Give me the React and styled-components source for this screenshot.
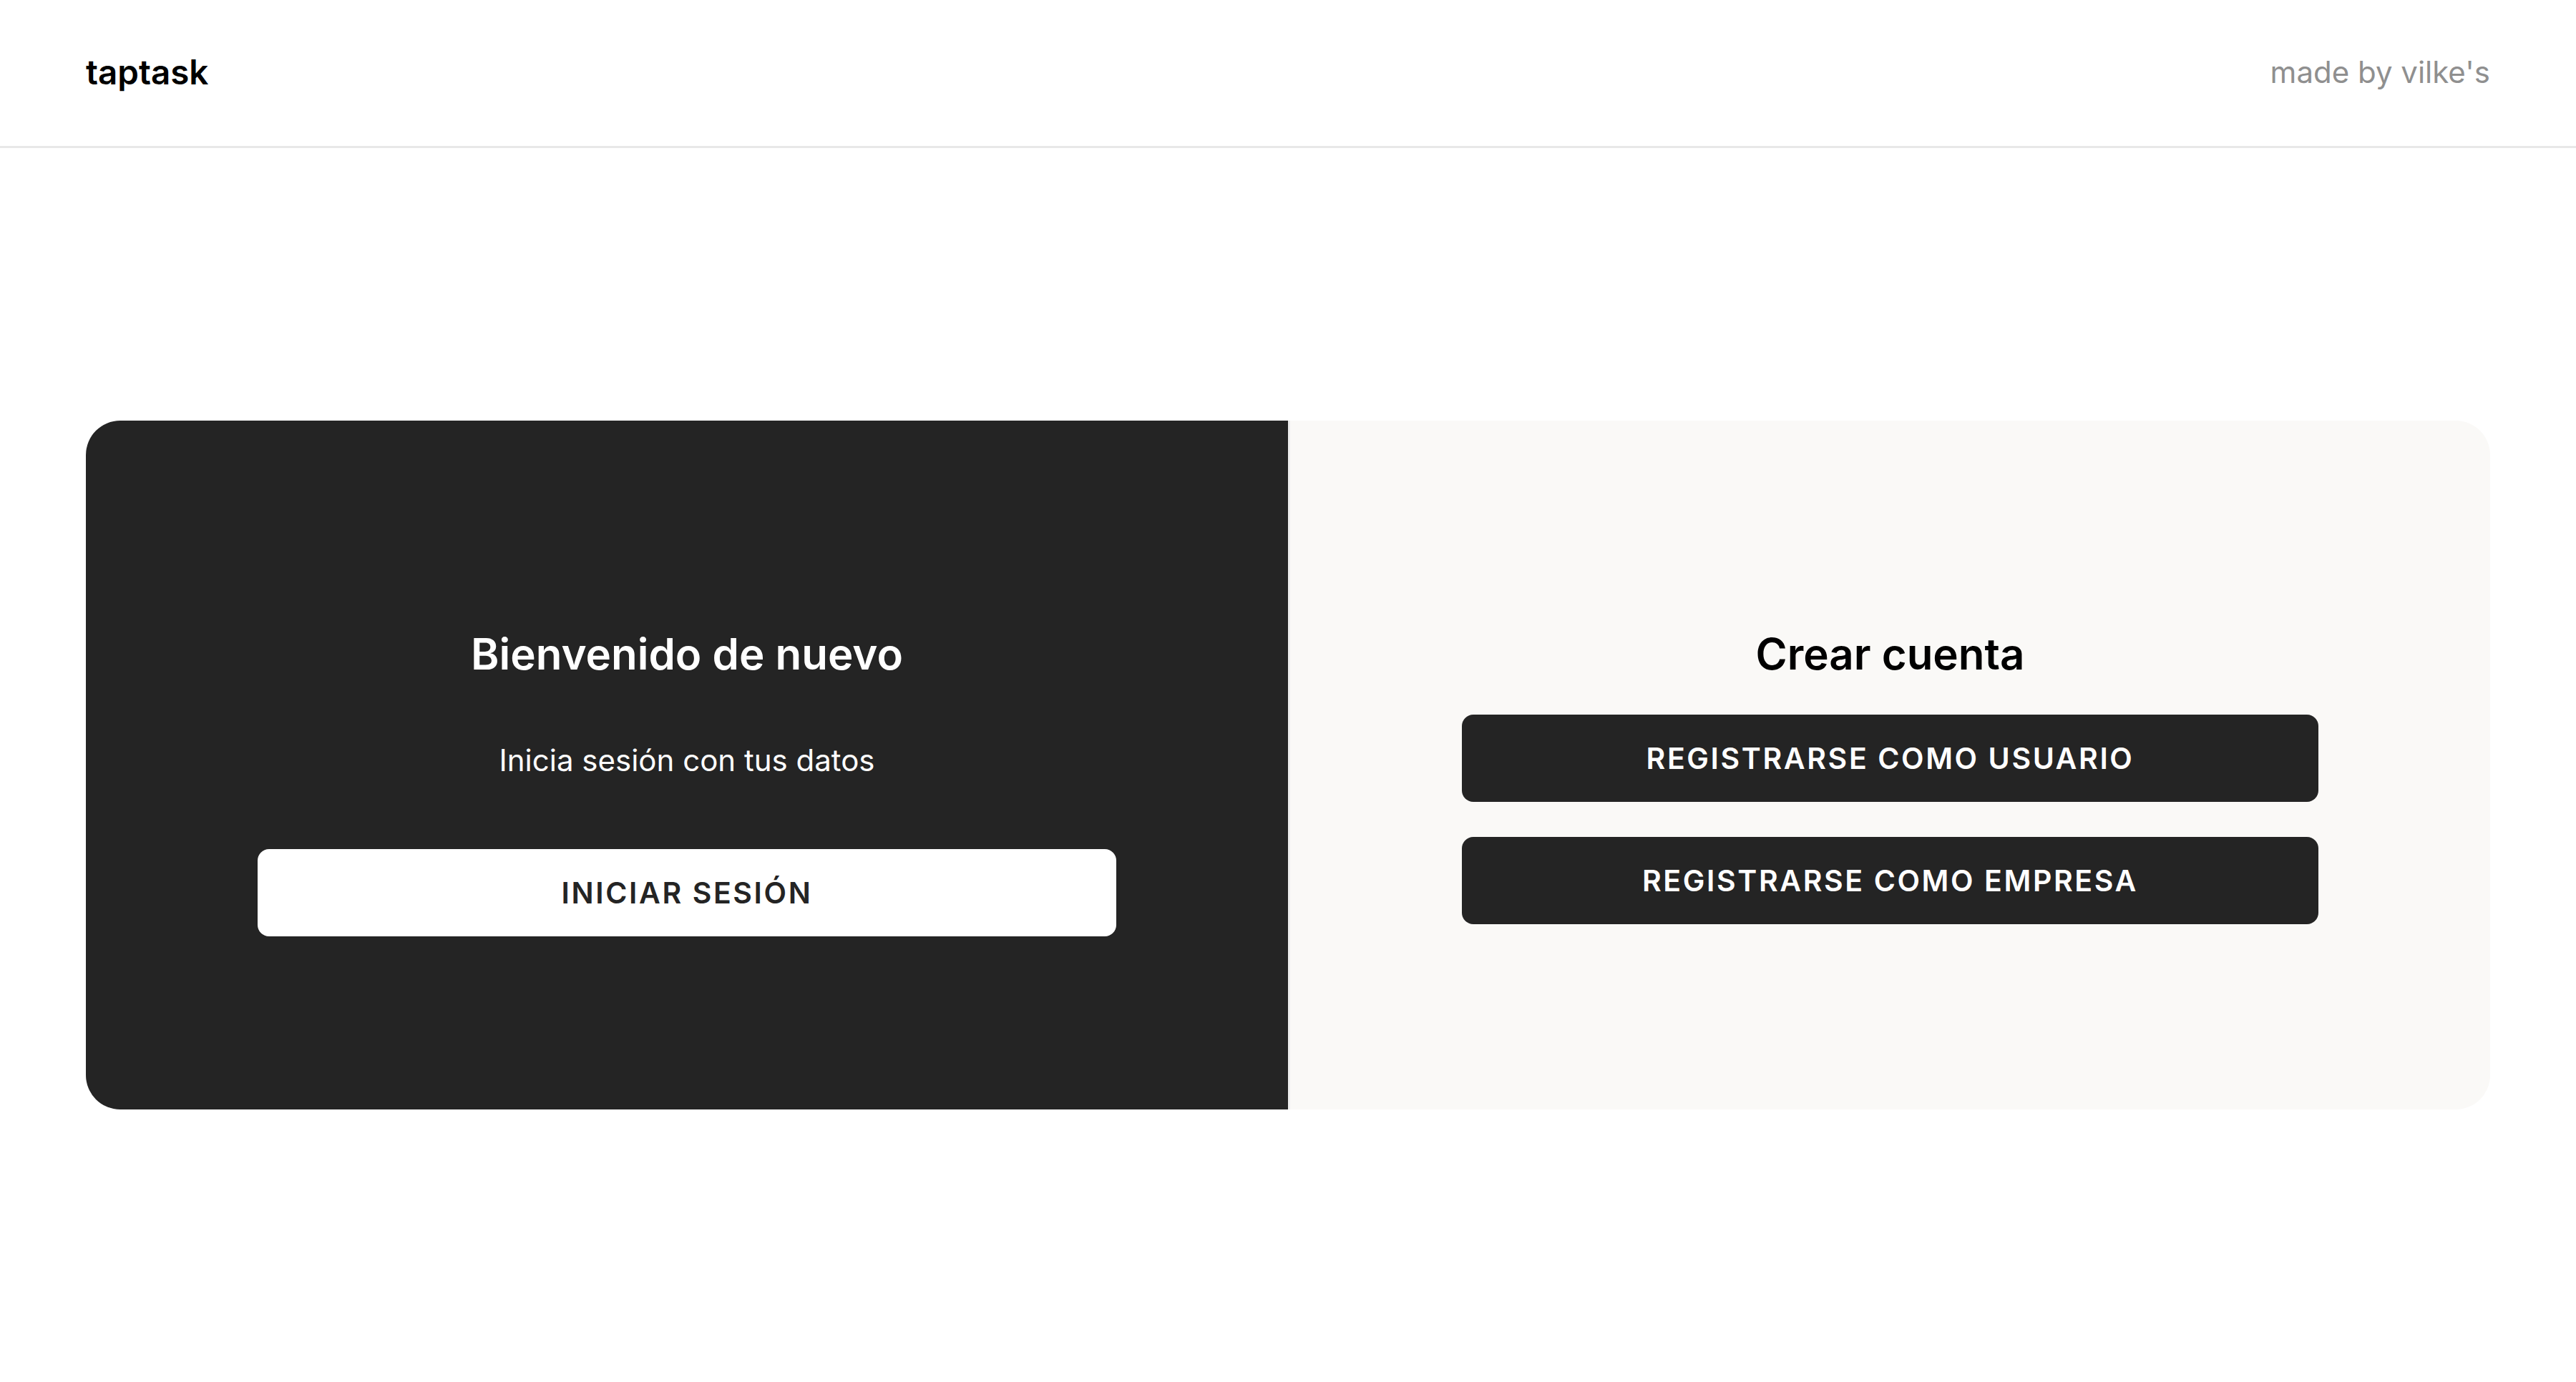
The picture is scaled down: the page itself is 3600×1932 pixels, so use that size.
import styled, { createGlobalStyle } from "styled-components";

const GlobalStyle = createGlobalStyle`
  * {
    box-sizing: border-box;
  }
  body {
    margin: 0;
    background: #ffffff;
    font-family: Inter, "Noto Sans", "Liberation Sans", sans-serif;
    color: #000000;
  }
`;

export default function App() {
  return (
    <>
      <GlobalStyle />
      <Header>
        <Brand>taptask</Brand>
        <Credit>made by vilke's</Credit>
      </Header>
      <Main>
        <Card>
          <Panel dark>
            <Title dark>Bienvenido de nuevo</Title>
            <Subtitle>Inicia sesión con tus datos</Subtitle>
            <ActionButton light>INICIAR SESIÓN</ActionButton>
          </Panel>
          <Panel>
            <Title>Crear cuenta</Title>
            <ButtonStack>
              <ActionButton>REGISTRARSE COMO USUARIO</ActionButton>
              <ActionButton>REGISTRARSE COMO EMPRESA</ActionButton>
            </ButtonStack>
          </Panel>
        </Card>
      </Main>
    </>
  );
}

const Header = styled.header`
  display: flex;
  justify-content: space-between;
  align-items: center;
  height: 207px;
  padding: 0 120px 4px;
  border-bottom: 3px solid #e8e8e8;
`;

const Brand = styled.div`
  font-size: 47.5px;
  font-weight: 600;
  color: #000;
`;

const Credit = styled.div`
  font-size: 42px;
  font-weight: 400;
  color: #8f8f8f;
`;

const Main = styled.main`
  display: flex;
  align-items: center;
  min-height: calc(100vh - 207px);
  padding: 0 120px;
`;

const Card = styled.section`
  display: grid;
  grid-template-columns: 1fr 1fr;
  width: 100%;
  height: 963px;
  border-radius: 48px;
  overflow: hidden;
`;

const Panel = styled.div`
  display: flex;
  flex-direction: column;
  align-items: center;
  padding: 290px 240px 0;
  background: ${(p) => (p.dark ? "#242424" : "#faf9f7")};
  border-left: ${(p) => (p.dark ? "none" : "3px solid #ededed")};
`;

const Title = styled.h1`
  margin: 0 0 49px;
  font-size: 60px;
  line-height: 72px;
  font-weight: 600;
  color: ${(p) => (p.dark ? "#ffffff" : "#000000")};
`;

const Subtitle = styled.p`
  margin: 38px 0 98px;
  font-size: 42px;
  line-height: 52px;
  font-weight: 400;
  color: #ffffff;
`;

const ButtonStack = styled.div`
  display: flex;
  flex-direction: column;
  gap: 49px;
  width: 100%;
`;

const ActionButton = styled.button`
  width: 100%;
  height: 122px;
  border: none;
  border-radius: 16px;
  font-family: inherit;
  font-size: 41px;
  font-weight: 600;
  letter-spacing: 2.6px;
  cursor: pointer;
  background: ${(p) => (p.light ? "#ffffff" : "#242424")};
  color: ${(p) => (p.light ? "#242424" : "#ffffff")};
`;
